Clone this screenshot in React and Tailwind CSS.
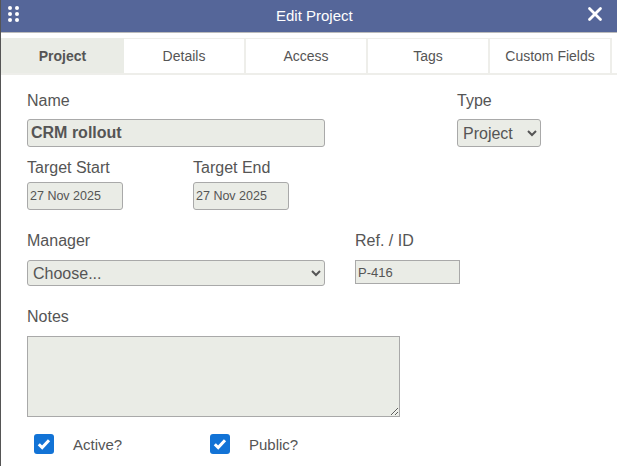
import React from "react";
import { X } from "lucide-react";

const tabs = ["Project", "Details", "Access", "Tags", "Custom Fields"];
const label = "block text-base leading-[20px] text-[#555]";
const field =
  "block bg-[#eaece6] border border-[#a9a9a9] text-[#555] outline-none";

function Grip() {
  return (
    <svg className="mb-[4px]" width="12" height="16" viewBox="0 0 12 16" fill="white">
      {[2, 8, 14].map((cy) =>
        [2, 9].map((cx) => <circle key={`${cx}-${cy}`} cx={cx} cy={cy} r="2" />),
      )}
    </svg>
  );
}

function Check({ text, className }) {
  return (
    <label className={`flex items-center ${className}`}>
      <span className="w-5 h-5 rounded-[3px] bg-[#1273d6] flex items-center justify-center">
        <svg width="14" height="12" viewBox="0 0 14 12" fill="none">
          <path d="M1.8 6.2 5.2 9.6 12 2.2" stroke="white" strokeWidth="3" />
        </svg>
      </span>
      <span className="ml-[19px] pt-[2px] text-[15px] leading-5 text-[#555]">{text}</span>
    </label>
  );
}

export default function App() {
  return (
    <div className="w-[617px] h-[466px] overflow-hidden bg-white border-l border-[#555] font-['Liberation_Sans',Arial,sans-serif]">
      <div className="h-[33px] bg-[#556699] border-b border-[#bbb] flex items-center pl-[7px] pr-[11px]">
        <Grip />
        <span className="ml-[256px] mr-auto text-[15px] text-white">Edit Project</span>
        <X className="mb-[4px]" size={22} strokeWidth={3} color="white" />
      </div>

      <div className="mt-[5px] h-[37px] flex border-b-2 border-[#eeeeea]">
        {tabs.map((t, i) => (
          <div
            key={t}
            className={
              i === 0
                ? "w-[123px] flex items-center justify-center bg-[#eaece6] text-sm font-bold text-[#555]"
                : "w-[122px] flex items-center justify-center border-t border-r-2 border-[#eeeeea] text-sm text-[#555]"
            }
          >
            {t}
          </div>
        ))}
      </div>

      <div className="pl-[26px] pt-4">
        <div className="flex">
          <div className="w-[430px]">
            <span className={label}>Name</span>
            <input
              readOnly
              value="CRM rollout"
              className={`${field} mt-[8px] w-[298px] h-[28px] rounded-[3px] px-[3px] text-base font-bold`}
            />
          </div>
          <div>
            <span className={label}>Type</span>
            <select
              defaultValue="Project"
              className={`${field} mt-[8px] w-[84px] h-[28px] rounded-[3px] pl-[1px] text-base appearance-auto`}
            >
              <option>Project</option>
            </select>
          </div>
        </div>

        <div className="flex mt-[11px]">
          <div className="w-[166px]">
            <span className={label}>Target Start</span>
            <input
              readOnly
              value="27 Nov 2025"
              className={`${field} mt-[4px] w-[96px] h-[28px] rounded-[3px] px-[2px] text-[12.5px]`}
            />
          </div>
          <div>
            <span className={label}>Target End</span>
            <input
              readOnly
              value="27 Nov 2025"
              className={`${field} mt-[4px] w-[96px] h-[28px] rounded-[3px] px-[2px] text-[12.5px]`}
            />
          </div>
        </div>

        <div className="flex mt-[21px]">
          <div className="w-[328px]">
            <span className={label}>Manager</span>
            <select
              defaultValue=""
              className={`${field} mt-[9px] w-[298px] h-[26px] rounded-[3px] pl-[1px] text-base appearance-auto`}
            >
              <option value="">Choose...</option>
            </select>
          </div>
          <div>
            <span className={label}>Ref. / ID</span>
            <input
              readOnly
              value="P-416"
              className={`${field} mt-[9px] w-[105px] h-[24px] px-[2px] text-[13px]`}
            />
          </div>
        </div>

        <span className={`${label} mt-[21px]`}>Notes</span>
        <textarea
          readOnly
          className={`${field} mt-[9px] w-[373px] h-[81px]`}
        />

        <div className="flex mt-[16px] pl-[7px]">
          <Check text="Active?" className="w-[176px]" />
          <Check text="Public?" />
        </div>
      </div>
    </div>
  );
}
